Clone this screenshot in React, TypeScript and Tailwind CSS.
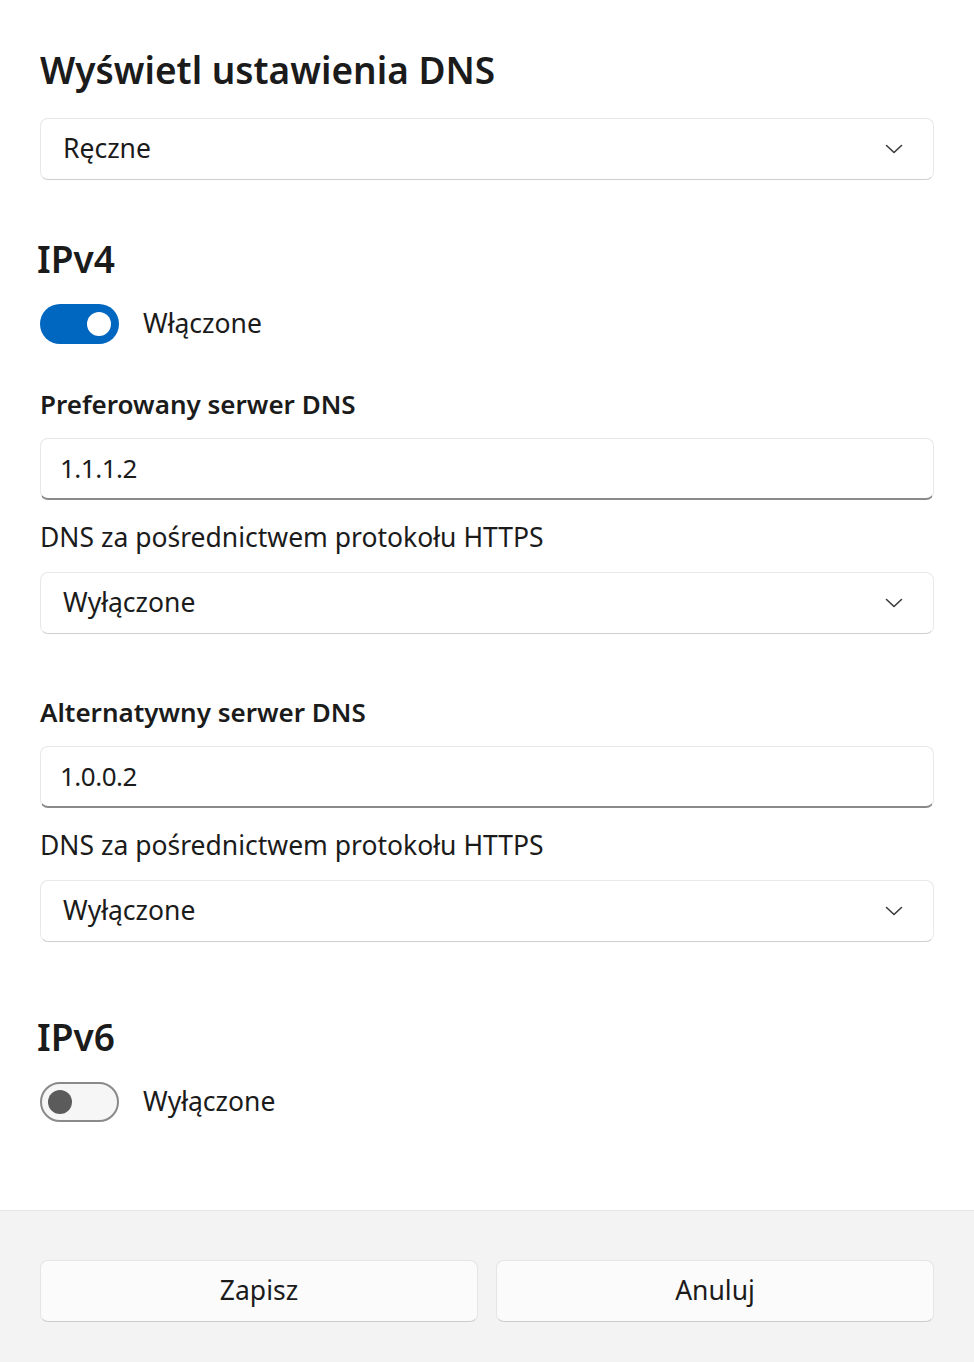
import React from 'react';

const font = { fontFamily: '"Noto Sans", "Open Sans", "Liberation Sans", sans-serif' };

function Chevron() {
  return (
    <svg width="18" height="10" viewBox="0 0 18 10" fill="none" className="shrink-0">
      <path d="M1.5 1.5 L9 8.5 L16.5 1.5" stroke="#3b3b3b" strokeWidth="1.6" strokeLinecap="round" strokeLinejoin="round" />
    </svg>
  );
}

function Select({ value, className = '' }: { value: string; className?: string }) {
  return (
    <div
      className={`h-[62px] flex items-center justify-between pl-[22px] pr-[30px] bg-white rounded-[8px] border border-[#e8e8e8] border-b-[#cfcfcf] text-[26.5px] text-[#1b1b1b] ${className}`}
    >
      <span>{value}</span>
      <Chevron />
    </div>
  );
}

function TextBox({ value, className = '' }: { value: string; className?: string }) {
  return (
    <div
      className={`h-[62px] flex items-center pl-[19px] bg-white rounded-[8px] border border-[#e8e8e8] border-b-2 border-b-[#8a8a8a] text-[26px] tracking-[-0.5px] text-[#1b1b1b] ${className}`}
    >
      {value}
    </div>
  );
}

function Toggle({ on, label, className = '' }: { on: boolean; label: string; className?: string }) {
  return (
    <div className={`h-[40px] flex items-center gap-[24px] ${className}`}>
      {on ? (
        <div className="w-[79px] h-[40px] rounded-full bg-[#0067c0] flex items-center justify-end pr-[8px]">
          <div className="w-[24px] h-[24px] rounded-full bg-white" />
        </div>
      ) : (
        <div className="w-[79px] h-[40px] rounded-full bg-[#f6f6f6] border-2 border-[#8a8a8a] flex items-center pl-[6px]">
          <div className="w-[24px] h-[24px] rounded-full bg-[#5b5b5b]" />
        </div>
      )}
      <span className="text-[26.5px] text-[#1b1b1b]">{label}</span>
    </div>
  );
}

function Label({ children, bold, className = '' }: { children: React.ReactNode; bold?: boolean; className?: string }) {
  return (
    <div className={`h-[36px] flex items-center text-[#1b1b1b] ${bold ? 'font-semibold text-[26px]' : 'text-[26.5px]'} ${className}`}>
      {children}
    </div>
  );
}

function Heading({ children, className = '' }: { children: React.ReactNode; className?: string }) {
  return <div className={`h-[52px] flex items-center text-[37px] font-semibold text-[#1b1b1b] -ml-[3px] ${className}`}>{children}</div>;
}

export default function App() {
  return (
    <div style={font} className="w-[974px] h-[1362px] bg-white flex flex-col overflow-hidden">
      <div className="px-[40px] pt-[44px] flex flex-col">
        <div className="h-[52px] flex items-center text-[37px] font-semibold text-[#1b1b1b]">Wyświetl ustawienia DNS</div>
        <Select value="Ręczne" className="mt-[22px]" />

        <Heading className="mt-[53px]">IPv4</Heading>
        <Toggle on label="Włączone" className="mt-[19px]" />

        <Label bold className="mt-[42px]">Preferowany serwer DNS</Label>
        <TextBox value="1.1.1.2" className="mt-[16px]" />
        <Label className="mt-[20px]">DNS za pośrednictwem protokołu HTTPS</Label>
        <Select value="Wyłączone" className="mt-[16px]" />

        <Label bold className="mt-[60px]">Alternatywny serwer DNS</Label>
        <TextBox value="1.0.0.2" className="mt-[16px]" />
        <Label className="mt-[20px]">DNS za pośrednictwem protokołu HTTPS</Label>
        <Select value="Wyłączone" className="mt-[16px]" />

        <Heading className="mt-[69px]">IPv6</Heading>
        <Toggle on={false} label="Wyłączone" className="mt-[19px]" />
      </div>

      <div className="mt-[88px] flex-1 bg-[#f3f3f3] border-t border-[#e5e5e5] px-[40px] pt-[49px] flex gap-[18px]">
        <button className="flex-1 h-[62px] rounded-[8px] bg-[#fbfbfb] border border-[#e5e5e5] border-b-[#cccccc] text-[26.5px] text-[#1b1b1b]">
          Zapisz
        </button>
        <button className="flex-1 h-[62px] rounded-[8px] bg-[#fbfbfb] border border-[#e5e5e5] border-b-[#cccccc] text-[26.5px] text-[#1b1b1b]">
          Anuluj
        </button>
      </div>
    </div>
  );
}
